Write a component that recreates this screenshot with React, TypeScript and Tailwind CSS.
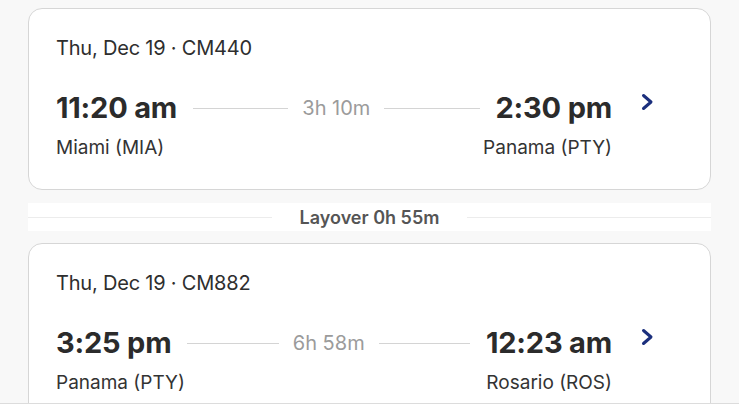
const flights = [
  {
    date: 'Thu, Dec 19 · CM440',
    depTime: '11:20 am',
    depCity: 'Miami (MIA)',
    duration: '3h 10m',
    arrTime: '2:30 pm',
    arrCity: 'Panama (PTY)',
  },
  {
    date: 'Thu, Dec 19 · CM882',
    depTime: '3:25 pm',
    depCity: 'Panama (PTY)',
    duration: '6h 58m',
    arrTime: '12:23 am',
    arrCity: 'Rosario (ROS)',
  },
]

function Chevron() {
  return (
    <svg width="14" height="18" viewBox="0 0 14 18" fill="none">
      <path d="M3.5 2.5 L11 9 L3.5 15.5" stroke="#1b2f7d" strokeWidth="3" strokeLinecap="round" strokeLinejoin="round" />
    </svg>
  )
}

function FlightCard({ f }: { f: (typeof flights)[number] }) {
  return (
    <div className="bg-white border border-[#d6d6d6] rounded-[14px] pl-[27px] pr-[56px] pt-[26px] pb-[29px] flex gap-7">
      <div className="flex-1 min-w-0">
        <div className="text-[20px] leading-[26px] text-[#2e2e2e] tracking-[-0.2px]">{f.date}</div>
        <div className="flex items-center mt-[28px] h-[38px]">
          <span className="text-[29px] font-bold text-[#2b2b2b] tracking-[-0.2px]">{f.depTime}</span>
          <div className="flex-1 h-px bg-[#d4d4d4] ml-4 mr-[14px]" />
          <span className="text-[20px] text-[#9b9b9b]">{f.duration}</span>
          <div className="flex-1 h-px bg-[#d4d4d4] ml-[14px] mr-4" />
          <span className="text-[29px] font-bold text-[#2b2b2b] tracking-[-0.2px]">{f.arrTime}</span>
        </div>
        <div className="flex justify-between text-[19px] leading-[24px] text-[#333] mt-[9px]">
          <span>{f.depCity}</span>
          <span>{f.arrCity}</span>
        </div>
      </div>
      <div className="pt-[58px]">
        <Chevron />
      </div>
    </div>
  )
}

export default function App() {
  return (
    <div className="w-[739px] h-[416px] flex flex-col bg-[#f8f8f8] overflow-hidden" style={{ fontFamily: 'Inter, "Open Sans", sans-serif' }}>
      <div className="flex-1 min-h-0 overflow-hidden px-7 pt-2">
        <FlightCard f={flights[0]} />
        <div className="bg-white h-[28px] mt-[13px] mb-[12px] flex items-center gap-7">
          <div className="flex-1 h-px bg-[#ececec]" />
          <span className="text-[18px] font-semibold text-[#555]">Layover 0h 55m</span>
          <div className="flex-1 h-px bg-[#ececec]" />
        </div>
        <FlightCard f={flights[1]} />
      </div>
      <div className="h-[13px] bg-white border-t border-[#dcdcdc]" />
    </div>
  )
}
